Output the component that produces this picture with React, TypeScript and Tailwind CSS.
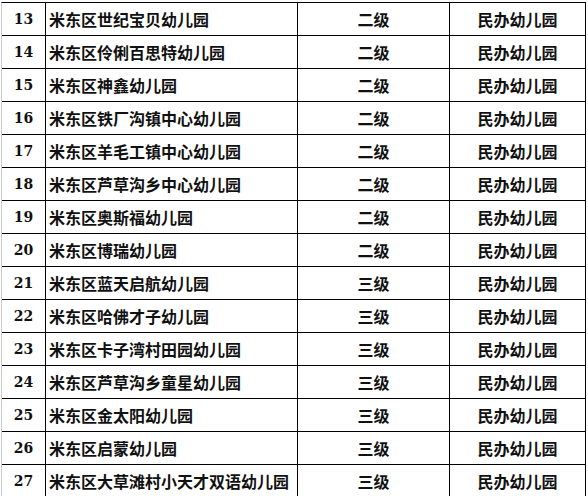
const rows = [
  { no: "13", name: "米东区世纪宝贝幼儿园", level: "二级", type: "民办幼儿园" },
  { no: "14", name: "米东区伶俐百思特幼儿园", level: "二级", type: "民办幼儿园" },
  { no: "15", name: "米东区神鑫幼儿园", level: "二级", type: "民办幼儿园" },
  { no: "16", name: "米东区铁厂沟镇中心幼儿园", level: "二级", type: "民办幼儿园" },
  { no: "17", name: "米东区羊毛工镇中心幼儿园", level: "二级", type: "民办幼儿园" },
  { no: "18", name: "米东区芦草沟乡中心幼儿园", level: "二级", type: "民办幼儿园" },
  { no: "19", name: "米东区奥斯福幼儿园", level: "二级", type: "民办幼儿园" },
  { no: "20", name: "米东区博瑞幼儿园", level: "二级", type: "民办幼儿园" },
  { no: "21", name: "米东区蓝天启航幼儿园", level: "三级", type: "民办幼儿园" },
  { no: "22", name: "米东区哈佛才子幼儿园", level: "三级", type: "民办幼儿园" },
  { no: "23", name: "米东区卡子湾村田园幼儿园", level: "三级", type: "民办幼儿园" },
  { no: "24", name: "米东区芦草沟乡童星幼儿园", level: "三级", type: "民办幼儿园" },
  { no: "25", name: "米东区金太阳幼儿园", level: "三级", type: "民办幼儿园" },
  { no: "26", name: "米东区启蒙幼儿园", level: "三级", type: "民办幼儿园" },
  { no: "27", name: "米东区大草滩村小天才双语幼儿园", level: "三级", type: "民办幼儿园" },
]

const cjk = "font-['Noto_Sans_CJK_SC',sans-serif] font-bold text-[16px] text-[#111]"

export default function App() {
  return (
    <div className="w-[588px] h-[496px] overflow-hidden bg-white">
      <div className="mt-[2px] ml-[1px] w-[585px] border-l border-l-[#c8c8c8] border-t border-t-black">
        {rows.map((r) => (
          <div
            key={r.no}
            className="grid grid-cols-[44px_252px_152px_136px] h-[33px] border-b border-black"
          >
            <div className="flex items-center justify-center border-r border-black font-['DejaVu_Serif',serif] font-bold text-[14px] text-[#111]">
              {r.no}
            </div>
            <div className={`flex items-center pl-[3px] border-r border-black ${cjk}`}>
              {r.name}
            </div>
            <div className={`flex items-center justify-center border-r border-black ${cjk}`}>
              {r.level}
            </div>
            <div className={`flex items-center justify-center border-r border-black ${cjk}`}>
              {r.type}
            </div>
          </div>
        ))}
      </div>
    </div>
  )
}
